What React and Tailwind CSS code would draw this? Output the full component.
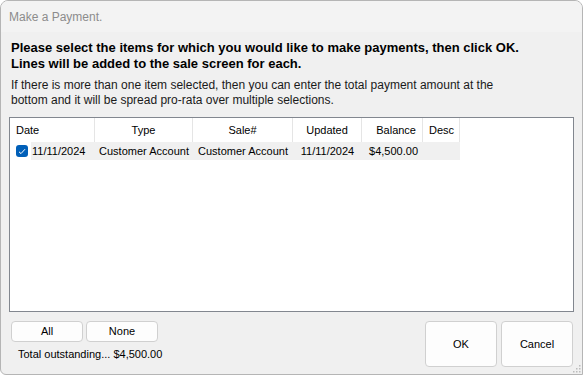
import React from "react";

const cols = [
  { label: "Date", w: 85, align: "left" },
  { label: "Type", w: 98, align: "center" },
  { label: "Sale#", w: 100, align: "center" },
  { label: "Updated", w: 69, align: "center" },
  { label: "Balance", w: 61, align: "right" },
  { label: "Desc", w: 37, align: "left" },
];

export default function App() {
  const font = { fontFamily: '"Liberation Sans", Arial, sans-serif' };
  return (
    <div className="w-[583px] h-[376px] bg-white" style={font}>
      <div className="relative w-[583px] h-[375px] border border-[#b5b5b5] rounded-tl-[8px] rounded-tr-[8px] rounded-bl-[6px] bg-[#f0f0f0] flex flex-col overflow-hidden">
        <div className="h-[31px] bg-[#f3f3f3] flex items-center pl-[8px] text-[12px] text-[#8c8c8c] shrink-0">
          Make a Payment.
        </div>
        <div className="pl-[10px] pt-[8px] text-[13px] font-bold text-black leading-[16px]">
          <div>Please select the items for which you would like to make payments, then click OK.</div>
          <div>Lines will be added to the sale screen for each.</div>
        </div>
        <div className="pl-[10px] pt-[6px] text-[12px] text-[#1a1a1a] leading-[15px]">
          <div>If there is more than one item selected, then you can enter the total payment amount at the</div>
          <div>bottom and it will be spread pro-rata over multiple selections.</div>
        </div>
        <div className="mt-[9px] ml-[8px] w-[565px] h-[195px] border border-[#82878f] bg-white shrink-0">
          <div className="flex h-[24px] text-[11px] text-black">
            {cols.map((c, i) => (
              <div
                key={i}
                className={
                  "h-full flex items-center border-r border-[#e5e5e5] px-[6px] whitespace-nowrap " +
                  (c.align === "center" ? "justify-center" : c.align === "right" ? "justify-end" : "justify-start")
                }
                style={{ width: c.w }}
              >
                {c.label}
              </div>
            ))}
          </div>
          <div className="flex h-[18px] text-[11px] text-black items-center whitespace-nowrap">
            <div className="w-[21px] h-full flex items-center justify-center pl-[3px]">
              <div className="w-[12px] h-[12px] rounded-[3px] bg-[#005fb8] flex items-center justify-center">
                <svg width="8" height="7" viewBox="0 0 8 7">
                  <path d="M1 3.8 L3 5.6 L7 1.2" stroke="white" strokeWidth="1" fill="none" />
                </svg>
              </div>
            </div>
            <div className="flex h-full bg-[#f0f0f0] items-center">
              <div className="w-[64px] pl-[1px]">11/11/2024</div>
              <div className="w-[98px] text-center">Customer Account</div>
              <div className="w-[100px] text-center">Customer Account</div>
              <div className="w-[69px] text-center">11/11/2024</div>
              <div className="w-[61px] text-right pr-[5px]">$4,500.00</div>
              <div className="w-[37px]"></div>
            </div>
          </div>
        </div>
        <div className="flex mt-[9px] px-[10px] pr-[9px]">
          <div className="flex flex-col">
            <div className="flex gap-[3px]">
              <button className="w-[72px] h-[21px] border border-[#d0d0d0] rounded-[4px] bg-[#fdfdfd] text-[11px] text-black flex items-center justify-center">
                All
              </button>
              <button className="w-[72px] h-[21px] border border-[#d0d0d0] rounded-[4px] bg-[#fdfdfd] text-[11px] text-black flex items-center justify-center">
                None
              </button>
            </div>
            <div className="mt-[6px] ml-[7px] text-[11px] leading-[13px] text-black">Total outstanding... $4,500.00</div>
          </div>
          <div className="ml-auto flex gap-[4px]">
            <button className="w-[72px] h-[46px] border border-[#d0d0d0] rounded-[4px] bg-[#fdfdfd] text-[11px] text-black flex items-center justify-center">
              OK
            </button>
            <button className="w-[72px] h-[46px] border border-[#d0d0d0] rounded-[4px] bg-[#fdfdfd] text-[11px] text-black flex items-center justify-center">
              Cancel
            </button>
          </div>
        </div>
        <svg className="absolute right-[1px] bottom-[1px]" width="9" height="9" viewBox="0 0 9 9">
          <rect x="7" y="1" width="1.5" height="1.5" fill="#bcbcbc" />
          <rect x="4" y="4" width="1.5" height="1.5" fill="#bcbcbc" />
          <rect x="7" y="4" width="1.5" height="1.5" fill="#bcbcbc" />
          <rect x="1" y="7" width="1.5" height="1.5" fill="#bcbcbc" />
          <rect x="4" y="7" width="1.5" height="1.5" fill="#bcbcbc" />
          <rect x="7" y="7" width="1.5" height="1.5" fill="#bcbcbc" />
        </svg>
      </div>
    </div>
  );
}
